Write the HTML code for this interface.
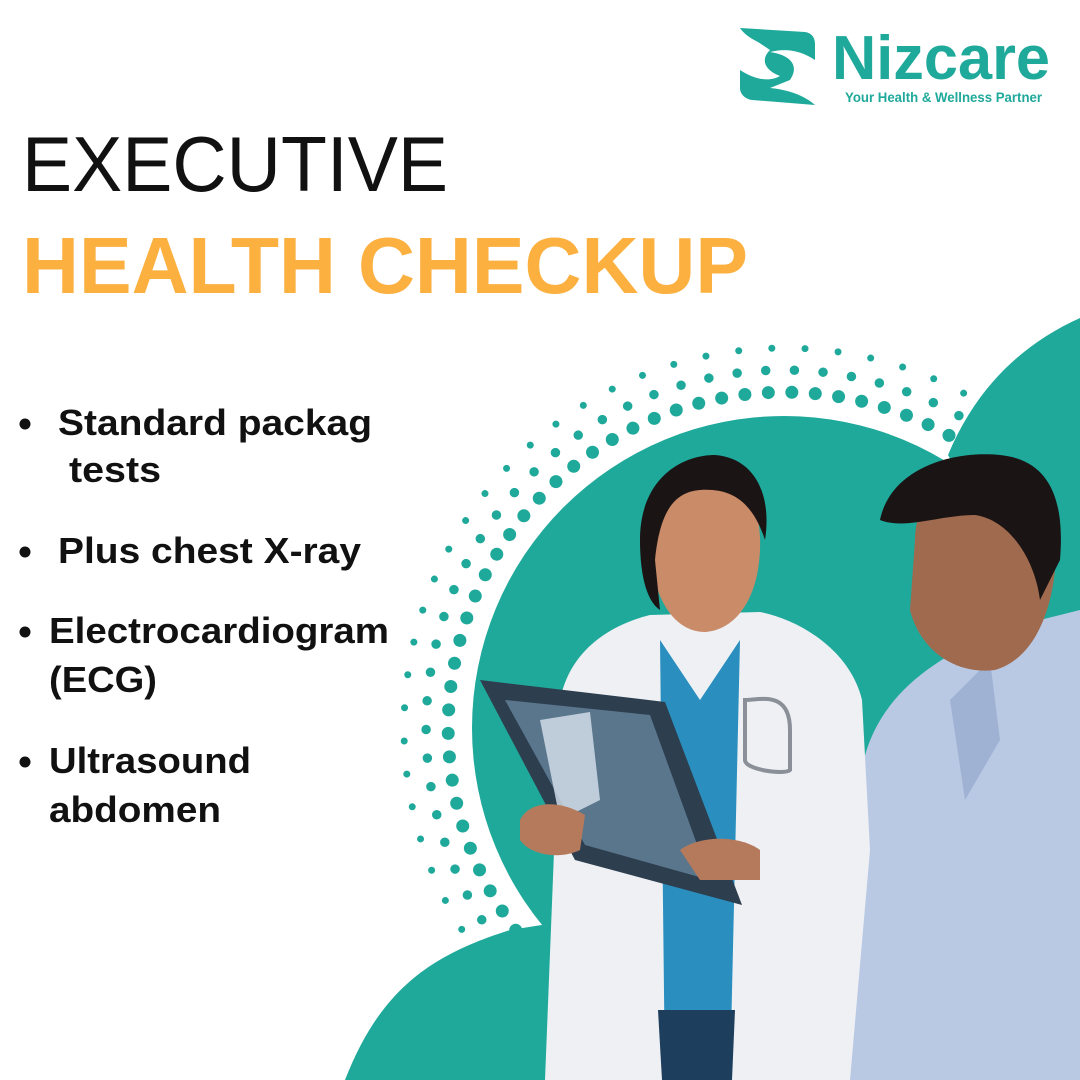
<!DOCTYPE html>
<html><head><meta charset="utf-8">
<style>
html,body{margin:0;padding:0;background:#fff;}
svg{display:block}
text{font-family:"Liberation Sans",Arial,sans-serif}
</style></head>
<body>
<svg width="1080" height="1080" viewBox="0 0 1080 1080" xmlns="http://www.w3.org/2000/svg">
<rect width="1080" height="1080" fill="#fff"/>
<g fill="#1fa99b">
  <circle cx="784" cy="728" r="312"/>
  <path d="M1080 318 C1020 345 975 390 948 455 L1080 700 Z"/>
  <path d="M345 1080 C380 990 430 955 510 930 L700 900 L700 1080 Z"/>
  <rect x="700" y="600" width="380" height="480"/>
</g>
<g fill="none" stroke="#1fa99b" stroke-linecap="round">
  <path d="M515.7 930.2 A336 336 0 0 1 962 443.1" stroke-width="13" stroke-dasharray="0 23.5"/>
  <path d="M498.1 943.4 A358 358 0 0 1 973.7 424.4" stroke-width="9.5" stroke-dasharray="0 28.7"/>
  <path d="M480.5 956.7 A380 380 0 0 1 985.4 405.8" stroke-width="7" stroke-dasharray="0 33.2"/>
</g>

<!-- man -->
<g>
  <path d="M840 1080 L860 780 C870 700 930 660 1000 630 L1080 610 L1080 1080 Z" fill="#b9c9e4"/>
  <path d="M950 700 L990 660 L1000 740 L965 800 Z" fill="#9fb2d4"/>
  <path d="M915 540 C915 500 945 470 985 470 C1035 470 1060 510 1055 570 C1050 620 1030 660 995 670 C955 675 920 650 910 610 Z" fill="#a06a4e"/>
  <path d="M880 520 C890 470 950 450 1000 455 C1050 460 1065 500 1060 560 L1040 600 C1035 560 1010 520 975 515 C940 515 905 530 880 520 Z" fill="#1a1414"/>
  <path d="M830 1040 L900 1010 L960 1080 L800 1080 Z" fill="#b9c9e4"/>
</g>
<!-- doctor -->
<g>
  <path d="M545 1080 L560 700 C570 650 610 625 650 615 L760 612 C800 620 850 650 862 700 L870 850 L850 1080 Z" fill="#eef0f4"/>
  <path d="M660 640 L700 700 L740 640 L730 1080 L665 1080 Z" fill="#2a8fbf"/>
  <path d="M658 1010 L735 1010 L732 1080 L662 1080 Z" fill="#1d3e5c"/>
  <path d="M650 545 C650 495 675 470 705 470 C740 470 762 500 760 550 C758 600 735 630 705 632 C675 632 652 600 650 545 Z" fill="#c98b68"/>
  <path d="M640 540 C640 480 680 455 715 455 C755 458 772 495 765 540 C752 500 730 488 700 490 C675 492 660 510 655 560 L660 610 C645 600 640 570 640 540 Z" fill="#1a1414"/>
  <path d="M745 700 C760 700 790 690 790 730 L790 770 C785 775 745 770 745 760 Z" fill="none" stroke="#8a8f98" stroke-width="4"/>
</g>
<!-- x-ray -->
<path d="M480 680 L665 702 L742 905 L575 860 Z" fill="#2d3e4f"/>
<path d="M505 700 L650 715 L710 880 L585 845 Z" fill="#6e8ea6" opacity="0.7"/>
<path d="M540 720 L590 712 L600 800 L560 820 Z" fill="#d8e4ee" opacity="0.8"/>
<path d="M520 820 C530 800 560 800 585 815 L580 850 C560 860 530 855 520 840 Z" fill="#b57a5c"/>
<path d="M680 850 C700 835 740 835 760 850 L760 880 L700 880 Z" fill="#b57a5c"/>

<text x="22" y="191" font-size="78" fill="#111" textLength="426" lengthAdjust="spacingAndGlyphs">EXECUTIVE</text>
<text x="22" y="293" font-size="80" font-weight="bold" fill="#fbb040" textLength="726" lengthAdjust="spacingAndGlyphs">HEALTH CHECKUP</text>

<g fill="#111" font-size="36" font-weight="bold">
  <circle cx="25" cy="424" r="5.5"/>
  <text x="58" y="435" textLength="314" lengthAdjust="spacingAndGlyphs">Standard packag</text>
  <text x="69" y="482" textLength="92" lengthAdjust="spacingAndGlyphs">tests</text>
  <circle cx="25" cy="552" r="5.5"/>
  <text x="58" y="563" textLength="303" lengthAdjust="spacingAndGlyphs">Plus chest X-ray</text>
  <circle cx="25" cy="632" r="5.5"/>
  <text x="49" y="643" textLength="340" lengthAdjust="spacingAndGlyphs">Electrocardiogram</text>
  <text x="49" y="692" textLength="108" lengthAdjust="spacingAndGlyphs">(ECG)</text>
  <circle cx="25" cy="762" r="5.5"/>
  <text x="49" y="773" textLength="202" lengthAdjust="spacingAndGlyphs">Ultrasound</text>
  <text x="49" y="822" textLength="172" lengthAdjust="spacingAndGlyphs">abdomen</text>
</g>

<g fill="#1fa99b">
  <path d="M740 28 L805 32 C812 33 815 38 815 44 L815 60 C800 50 785 48 770 52 C790 55 800 65 790 80 L770 88 C790 90 805 96 815 105 L752 100 C745 99 740 94 740 88 L740 70 C755 80 770 82 780 76 C765 70 760 60 770 50 L758 42 C750 38 744 34 740 28 Z"/>
  <text x="832" y="79" font-size="62" font-weight="bold" textLength="218" lengthAdjust="spacingAndGlyphs">Nizcare</text>
  <text x="845" y="102" font-size="14" font-weight="bold" textLength="197" lengthAdjust="spacingAndGlyphs">Your Health &amp; Wellness Partner</text>
</g>
</svg>
</body></html>
